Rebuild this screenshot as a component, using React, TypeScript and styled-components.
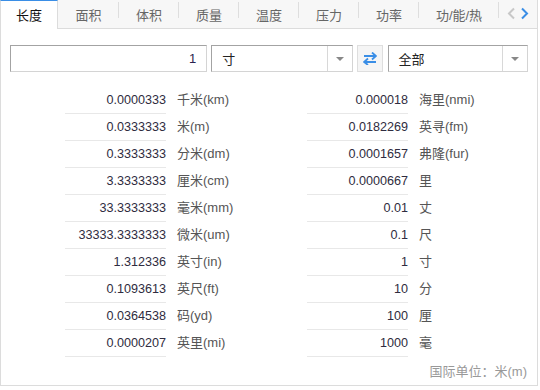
import React from "react";
import styled, { createGlobalStyle } from "styled-components";

const Global = createGlobalStyle`
  html, body { margin: 0; padding: 0; background: #fff; }
  body { font-family: "Liberation Sans", "Noto Sans CJK SC", sans-serif; font-size: 13px; color: #333; }
  * { box-sizing: border-box; }
`;

const Panel = styled.div`
  width: 538px;
  height: 386px;
  border: 1px solid #dcdcdc;
  border-top: none;
  display: flex;
  flex-direction: column;
  background: #fff;
`;

const TabBar = styled.div`
  display: flex;
  height: 29px;
  background: #f7f7f7;
  margin-left: -1px;
`;

const ActiveTab = styled.div`
  width: 58px;
  background: #fff;
  border-top: 1px solid #3a8ee6;
  border-left: 1px solid #dcdcdc;
  border-right: 1px solid #dcdcdc;
  display: flex;
  align-items: center;
  justify-content: center;
  color: #111;
  font-size: 13px;
  padding-bottom: 1px;
`;

const Tab = styled.div<{ $w: number }>`
  position: relative;
  width: ${(p) => p.$w}px;
  border-bottom: 1px solid #dcdcdc;
  display: flex;
  align-items: center;
  justify-content: center;
  color: #666;
  font-size: 13px;
  &::after {
    content: "";
    position: absolute;
    right: 0;
    top: 2px;
    height: 16px;
    width: 1px;
    background: #dedede;
  }
`;

const Arrows = styled.div`
  flex: 1;
  border-bottom: 1px solid #dcdcdc;
  display: flex;
  align-items: center;
  padding-left: 8px;
  gap: 4px;
  padding-bottom: 2px;
`;

const Controls = styled.div`
  display: flex;
  margin-top: 16px;
  padding: 0 9px;
  height: 27px;
`;

const InsetBox = styled.div<{ $w: number; $ml: number }>`
  width: ${(p) => p.$w}px;
  margin-left: ${(p) => p.$ml}px;
  height: 27px;
  border: 1px solid;
  border-color: #a3a3a3 #d4d4d4 #d4d4d4 #a3a3a3;
  display: flex;
  align-items: center;
  background: #fff;
`;

const InputText = styled.div`
  flex: 1;
  text-align: right;
  padding-right: 10px;
  color: #2a2350;
  font-size: 13px;
`;

const SelectText = styled.div`
  flex: 1;
  padding-left: 10px;
  color: #222;
  font-size: 13px;
`;

const Caret = styled.div`
  width: 25px;
  height: 100%;
  border-left: 1px solid #d8d8d8;
  display: flex;
  align-items: center;
  justify-content: center;
  &::before {
    content: "";
    border-left: 4px solid transparent;
    border-right: 4px solid transparent;
    border-top: 4px solid #888;
  }
`;

const SwapButton = styled.div`
  width: 26px;
  height: 27px;
  margin-left: 4px;
  background: #f5f5f5;
  border: 1px solid #dedede;
  display: flex;
  align-items: center;
  justify-content: center;
`;

const Results = styled.div`
  display: grid;
  grid-template-columns: 242px 242px;
  margin-top: 15px;
  padding-left: 64px;
`;

const Column = styled.div`
  display: flex;
  flex-direction: column;
`;

const Row = styled.div`
  display: flex;
  height: 27px;
  align-items: center;
`;

const Value = styled.div`
  width: 101px;
  height: 27px;
  line-height: 27px;
  text-align: right;
  border-bottom: 1px solid #e8e8e8;
  color: #2f2c40;
  font-size: 12.6px;
  padding-top: 0px;
`;

const Unit = styled.div`
  padding-left: 11px;
  color: #555;
  font-size: 13px;
  height: 27px;
  line-height: 26px;
`;

const Footer = styled.div`
  margin-top: 4px;
  padding-right: 10px;
  text-align: right;
  color: #999;
  font-size: 13px;
`;

const left: [string, string][] = [
  ["0.0000333", "千米(km)"],
  ["0.0333333", "米(m)"],
  ["0.3333333", "分米(dm)"],
  ["3.3333333", "厘米(cm)"],
  ["33.3333333", "毫米(mm)"],
  ["33333.3333333", "微米(um)"],
  ["1.312336", "英寸(in)"],
  ["0.1093613", "英尺(ft)"],
  ["0.0364538", "码(yd)"],
  ["0.0000207", "英里(mi)"],
];

const right: [string, string][] = [
  ["0.000018", "海里(nmi)"],
  ["0.0182269", "英寻(fm)"],
  ["0.0001657", "弗隆(fur)"],
  ["0.0000667", "里"],
  ["0.01", "丈"],
  ["0.1", "尺"],
  ["1", "寸"],
  ["10", "分"],
  ["100", "厘"],
  ["1000", "毫"],
];

const tabs: [string, number][] = [
  ["面积", 61],
  ["体积", 60],
  ["质量", 60],
  ["温度", 60],
  ["压力", 60],
  ["功率", 60],
  ["功/能/热", 80],
];

export default function App() {
  return (
    <>
      <Global />
      <Panel>
        <TabBar>
          <ActiveTab>长度</ActiveTab>
          {tabs.map(([t, w]) => (
            <Tab key={t} $w={w}>
              {t}
            </Tab>
          ))}
          <Arrows>
            <svg width="9" height="13" viewBox="0 0 9 13">
              <path d="M7 1.5 L2 6.5 L7 11.5" fill="none" stroke="#c8c8c8" strokeWidth="2" />
            </svg>
            <svg width="9" height="13" viewBox="0 0 9 13">
              <path d="M2 1.5 L7 6.5 L2 11.5" fill="none" stroke="#3a8ee6" strokeWidth="2" />
            </svg>
          </Arrows>
        </TabBar>
        <Controls>
          <InsetBox $w={198} $ml={0}>
            <InputText>1</InputText>
          </InsetBox>
          <InsetBox $w={142} $ml={4}>
            <SelectText>寸</SelectText>
            <Caret />
          </InsetBox>
          <SwapButton>
            <svg width="14" height="13" viewBox="0 0 14 13">
              <path d="M1 4 H12" stroke="#3a8ee6" strokeWidth="2" fill="none" />
              <path d="M9 0.5 L13 4 L9 7.5" stroke="#3a8ee6" strokeWidth="1.8" fill="none" />
              <path d="M2 10 H13" stroke="#3a8ee6" strokeWidth="2" fill="none" />
              <path d="M5 6.5 L1 10 L5 13" stroke="#3a8ee6" strokeWidth="1.8" fill="none" />
            </svg>
          </SwapButton>
          <InsetBox $w={141} $ml={5}>
            <SelectText>全部</SelectText>
            <Caret />
          </InsetBox>
        </Controls>
        <Results>
          <Column>
            {left.map(([v, u]) => (
              <Row key={u}>
                <Value>{v}</Value>
                <Unit>{u}</Unit>
              </Row>
            ))}
          </Column>
          <Column>
            {right.map(([v, u]) => (
              <Row key={u}>
                <Value>{v}</Value>
                <Unit>{u}</Unit>
              </Row>
            ))}
          </Column>
        </Results>
        <Footer>国际单位：米(m)</Footer>
      </Panel>
    </>
  );
}
